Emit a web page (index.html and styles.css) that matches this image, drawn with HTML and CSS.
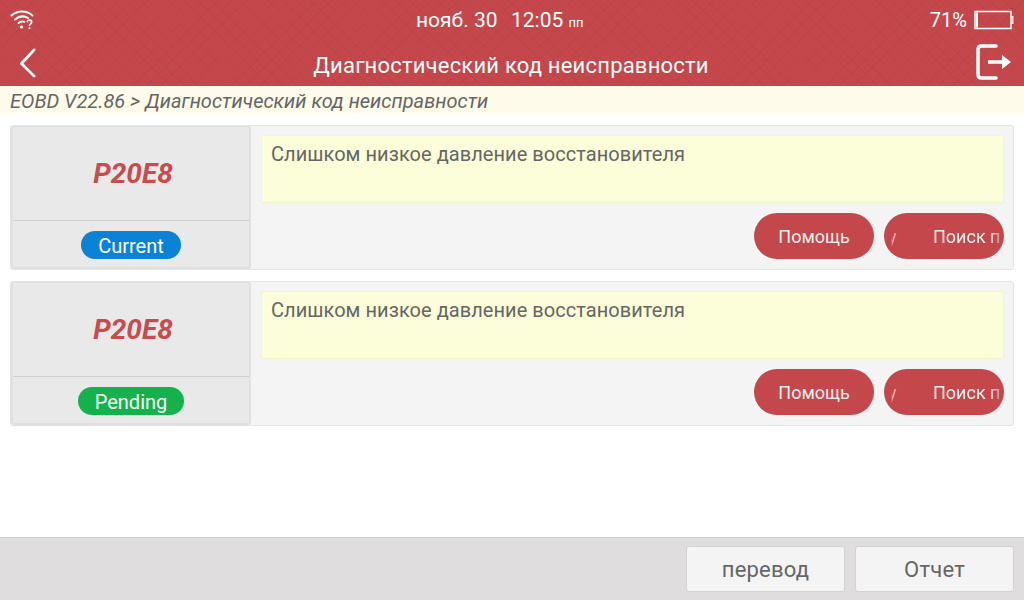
FILE: index.html
```html
<!DOCTYPE html>
<html lang="ru">
<head>
    <meta charset="UTF-8">
    <title>Диагностический код неисправности</title>
    <link rel="stylesheet" href="styles.css">
</head>
<body>

<div class="app">

    <!-- Red header -->
    <header class="header">
        <div class="status-bar">
            <svg class="wifi-icon" width="26" height="22" viewBox="0 0 26 22" fill="none" stroke="#fff" stroke-linecap="round">
                <path d="M1.500 7.500C7.500 2.200 16.500 2.200 22.500 7.500" stroke-width="2"/>
                <path d="M5 11.500C9 8 14 7.700 18 10" stroke-width="2"/>
                <path d="M8.500 15C10.500 13.400 12.500 13.200 14.200 13.800" stroke-width="2"/>
                <circle cx="11.500" cy="19" r="1.600" fill="#fff" stroke="none"/>
                <path d="M17.200 13.700C17.500 11.600 21.700 11.600 21.700 14C21.700 15.800 19.500 15.700 19.500 17.600" stroke-width="1.600"/>
                <circle cx="19.500" cy="20.200" r="1" fill="#fff" stroke="none"/>
            </svg>
            <div class="clock">нояб. 30&nbsp; <span class="time">12:05</span> <span class="ampm">пп</span></div>
            <div class="battery-box">
                <span>71%</span>
                <svg width="40" height="20" viewBox="0 0 40 20">
                    <rect x="1" y="1.500" width="36" height="17" fill="none" stroke="#fff" stroke-width="1.500"/>
                    <rect x="2" y="2.500" width="2" height="15" fill="#fff"/>
                    <rect x="37.500" y="6" width="2" height="8" fill="#f3dede"/>
                </svg>
            </div>
        </div>
        <div class="title-bar">
            <svg class="back-icon" width="20" height="30" viewBox="0 0 20 32" fill="none">
                <path d="M16.500 2L3 16.500L16.500 30" stroke="#fff" stroke-width="3" stroke-linecap="round" stroke-linejoin="round"/>
            </svg>
            <h1>Диагностический код неисправности</h1>
            <svg class="exit-icon" width="38" height="36" viewBox="0 0 38 36" fill="none" stroke="#fff">
                <path d="M21 2H6.500Q3 2 3 5.500V30.500Q3 34 6.500 34H21" stroke-width="3.500" stroke-linecap="round"/>
                <path d="M13 18H28" stroke-width="3.500"/>
                <path d="M27 11L36 18L27 25Z" fill="#fff" stroke="none"/>
            </svg>
        </div>
    </header>

    <!-- Breadcrumb -->
    <div class="crumb">EOBD V22.86 &gt; Диагностический код неисправности</div>

    <!-- Fault codes -->
    <main class="list">
        <section class="card">
            <div class="code-box">
                <div class="code">P20E8</div>
                <div class="state"><span class="badge current">Current</span></div>
            </div>
            <div class="detail">
                <div class="desc">Слишком низкое давление восстановителя</div>
                <div class="actions">
                    <button class="pill" type="button">Помощь</button>
                    <button class="pill pill-scroll" type="button"><span class="tail">у</span><span class="head">Поиск п</span></button>
                </div>
            </div>
        </section>

        <section class="card">
            <div class="code-box">
                <div class="code">P20E8</div>
                <div class="state"><span class="badge pending">Pending</span></div>
            </div>
            <div class="detail">
                <div class="desc">Слишком низкое давление восстановителя</div>
                <div class="actions">
                    <button class="pill" type="button">Помощь</button>
                    <button class="pill pill-scroll" type="button"><span class="tail">у</span><span class="head">Поиск п</span></button>
                </div>
            </div>
        </section>
    </main>

    <!-- Bottom bar -->
    <footer class="footer">
        <button class="foot-btn" type="button">перевод</button>
        <button class="foot-btn" type="button">Отчет</button>
    </footer>

</div>

</body>
</html>
```

FILE: styles.css
```css
/* General Styling */
* {
    box-sizing: border-box;
}

html, body {
    margin: 0;
    padding: 0;
    height: 100%;
}

body {
    font-family: Roboto, "Liberation Sans", sans-serif;
    background: #fff;
    color: #666;
    overflow: hidden;
}

.app {
    display: flex;
    flex-direction: column;
    height: 600px;
}

/* Header */
.header {
    height: 86px;
    flex: none;
    color: #fff;
    background-color: #c4484b;
    background-image:
        repeating-linear-gradient(45deg, rgba(120, 30, 35, 0.07) 0 1px, transparent 1px 10px),
        repeating-linear-gradient(-45deg, rgba(120, 30, 35, 0.07) 0 1px, transparent 1px 10px);
}

.status-bar {
    height: 40px;
    display: flex;
    align-items: center;
    padding: 0 10px;
    font-size: 20px;
}

.wifi-icon {
    flex: none;
    margin-bottom: 2px;
}

.clock {
    margin-left: 380px;
    font-size: 21px;
    white-space: nowrap;
}

.time {
    margin-left: 3px;
}

.ampm {
    font-size: 13px;
}

.battery-box {
    margin-left: auto;
    display: flex;
    align-items: center;
    gap: 7px;
}

.title-bar {
    height: 46px;
    display: flex;
    align-items: center;
    justify-content: space-between;
    padding: 0 11px 0 18px;
}

.title-bar h1 {
    margin: 4px 0 0 9px;
    font-size: 22px;
    font-weight: 400;
    letter-spacing: 0.2px;
}

.exit-icon {
    margin-bottom: 3px;
}

/* Breadcrumb */
.crumb {
    height: 27px;
    flex: none;
    padding-left: 10px;
    line-height: 31px;
    font-size: 20px;
    font-style: italic;
    background: #fffbeb;
    white-space: nowrap;
    overflow: hidden;
}

/* Fault list */
.list {
    flex: 1;
    display: flex;
    flex-direction: column;
    gap: 11px;
    padding: 12px 10px 0;
}

.card {
    display: flex;
    height: 145px;
    background: #f4f4f4;
    border: 1px solid #e4e4e4;
    border-radius: 3px;
}

.code-box {
    width: 240px;
    flex: none;
    display: flex;
    flex-direction: column;
    background: #e9e9e9;
    border: 2px solid #e0e0e0;
    border-width: 1px 2px 2px 2px;
    border-radius: 3px;
}

.code {
    height: 94px;
    display: flex;
    align-items: center;
    justify-content: center;
    padding-left: 4px;
    font-size: 28px;
    font-weight: 700;
    font-style: italic;
    color: #c84b4e;
    border-bottom: 1px solid #cfcfcf;
}

.state {
    flex: 1;
    display: flex;
    align-items: center;
    justify-content: center;
    padding-top: 2px;
}

.badge {
    height: 28px;
    padding: 0 17px;
    border-radius: 14px;
    line-height: 30px;
    font-size: 20px;
    color: #fff;
}

.badge.current {
    background: #0b82d6;
}

.badge.pending {
    background: #15b24c;
}

.detail {
    flex: 1;
    display: flex;
    flex-direction: column;
    padding: 9px 9px 0 10px;
}

.desc {
    height: 68px;
    padding: 6px 9px;
    font-size: 20px;
    letter-spacing: 0.05px;
    line-height: 24px;
    background: #fbfed8;
    border: 1px solid #f1f5c9;
    border-radius: 2px;
}

.actions {
    display: flex;
    justify-content: flex-end;
    gap: 10px;
    margin-top: 10px;
}

.pill {
    width: 120px;
    height: 46px;
    padding: 0;
    border: none;
    border-radius: 23px;
    background: #c4484b;
    color: #f8eeee;
    font-family: inherit;
    font-size: 18px;
}

/* Scrolling label, caught mid-way */
.pill-scroll {
    display: flex;
    align-items: center;
    padding-left: 4px;
    white-space: nowrap;
}

.tail {
    width: 45px;
    flex: none;
    text-align: left;
    -webkit-mask-image: linear-gradient(to right, transparent 3px, rgba(0, 0, 0, 0.7) 5px, rgba(0, 0, 0, 0.35) 10px);
    mask-image: linear-gradient(to right, transparent 3px, rgba(0, 0, 0, 0.7) 5px, rgba(0, 0, 0, 0.35) 10px);
}

.head {
    flex: none;
    -webkit-mask-image: linear-gradient(to right, #000 80%, rgba(0, 0, 0, 0.35));
    mask-image: linear-gradient(to right, #000 80%, rgba(0, 0, 0, 0.35));
}

/* Bottom bar */
.footer {
    height: 63px;
    flex: none;
    display: flex;
    justify-content: flex-end;
    gap: 10px;
    padding: 8px 10px;
    background: #dfdddd;
    border-top: 1px solid #cfcdcd;
}

.foot-btn {
    width: 159px;
    height: 46px;
    background: #f4f4f4;
    border: 1px solid #d2d2d2;
    border-radius: 3px;
    font-family: inherit;
    font-size: 22px;
    letter-spacing: 0.2px;
    color: #666;
}
```
